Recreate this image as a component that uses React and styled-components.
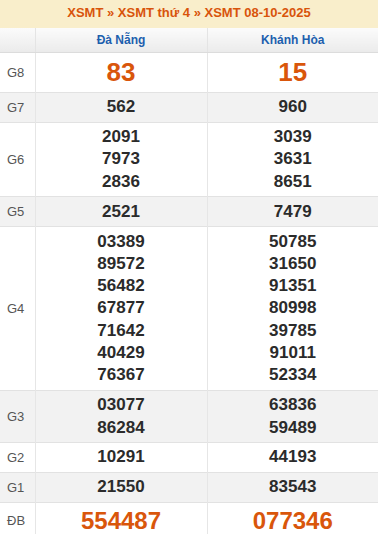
import React from 'react'
import styled, { createGlobalStyle } from 'styled-components'

const GlobalStyle = createGlobalStyle`
  html, body {
    margin: 0;
    padding: 0;
    background: #fff;
    font-family: "Liberation Sans", Arial, sans-serif;
  }
`

const Wrap = styled.div`
  width: 378px;
`

const TitleBar = styled.div`
  height: 28px;
  line-height: 26px;
  background: #f9eecb;
  text-align: center;
  font-size: 13px;
  font-weight: bold;
  color: #d8540b;
`

const Table = styled.table`
  width: 378px;
  border-collapse: collapse;
  table-layout: fixed;
`

const HeadCell = styled.th`
  height: 24px;
  padding: 0;
  background: linear-gradient(#fbfbfb, #ebebeb);
  border-bottom: 1px solid #dcdcdc;
  border-left: 1px solid #e4e4e4;
  font-size: 12px;
  font-weight: bold;
  color: #1d5fae;
  text-align: center;
  &:first-child {
    border-left: none;
  }
`

const Row = styled.tr`
  background: ${p => (p.$alt ? '#f2f2f2' : '#fff')};
  border-bottom: 1px solid #e2e2e2;
`

const Label = styled.td`
  padding: 0 0 0 7px;
  font-size: 13px;
  color: #555;
  vertical-align: middle;
`

const Cell = styled.td`
  border-left: 1px solid #e6e6e6;
  text-align: center;
  vertical-align: middle;
  padding: ${p => (p.$size ? '0' : '3.3px 0')};
  font-size: ${p => p.$size || 17}px;
  line-height: ${p => (p.$tall ? '39px' : p.$size ? '36px' : '22.3px')};
  font-weight: bold;
  color: ${p => (p.$size ? '#d9560b' : '#2b2b2b')};
`

const Num = styled.div``

const rows = [
  { label: 'G8', a: ['83'], b: ['15'], size: 26, tall: true },
  { label: 'G7', a: ['562'], b: ['960'] },
  { label: 'G6', a: ['2091', '7973', '2836'], b: ['3039', '3631', '8651'] },
  { label: 'G5', a: ['2521'], b: ['7479'] },
  {
    label: 'G4',
    a: ['03389', '89572', '56482', '67877', '71642', '40429', '76367'],
    b: ['50785', '31650', '91351', '80998', '39785', '91011', '52334'],
  },
  { label: 'G3', a: ['03077', '86284'], b: ['63836', '59489'] },
  { label: 'G2', a: ['10291'], b: ['44193'] },
  { label: 'G1', a: ['21550'], b: ['83543'] },
  { label: 'ĐB', a: ['554487'], b: ['077346'], size: 24 },
]

const App = () => (
  <Wrap>
    <GlobalStyle />
    <TitleBar>XSMT » XSMT thứ 4 » XSMT 08-10-2025</TitleBar>
    <Table>
      <colgroup>
        <col style={{ width: 35 }} />
        <col style={{ width: 172 }} />
        <col style={{ width: 171 }} />
      </colgroup>
      <thead>
        <tr>
          <HeadCell />
          <HeadCell>Đà Nẵng</HeadCell>
          <HeadCell>Khánh Hòa</HeadCell>
        </tr>
      </thead>
      <tbody>
        {rows.map((r, i) => (
          <Row key={r.label} $alt={i % 2 === 1}>
            <Label>{r.label}</Label>
            <Cell $size={r.size} $tall={r.tall}>
              {r.a.map(n => <Num key={n}>{n}</Num>)}
            </Cell>
            <Cell $size={r.size} $tall={r.tall}>
              {r.b.map(n => <Num key={n}>{n}</Num>)}
            </Cell>
          </Row>
        ))}
      </tbody>
    </Table>
  </Wrap>
)

export default App
